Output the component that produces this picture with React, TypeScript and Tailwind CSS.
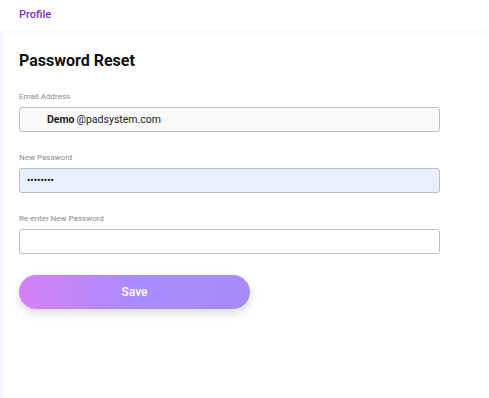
export default function App() {
  return (
    <div className="min-h-[398px] w-[489px] bg-white font-['Roboto',sans-serif]">
      <header className="h-[30px] flex items-center px-[19px] bg-white shadow-[0_2px_4px_rgba(120,110,200,0.06)] relative z-10">
        <span className="text-[11px] font-medium text-[#7b2fbe]">Profile</span>
      </header>
      <main className="border-l-[3px] border-[#f8f7ff] min-h-[368px] pl-[16px] pt-[21px]">
        <h1 className="text-[16px] font-bold text-[#111] leading-[20px]">Password Reset</h1>
        <div className="mt-[21px] flex flex-col gap-[21px] w-[421px]">
          <div>
            <label className="block text-[8px] leading-[10px] text-[#8a8a8a]">Email Address</label>
            <div className="mt-[5px] h-[25px] rounded-[3px] border border-[#bdbdbd] bg-[#f9f9f9] flex items-center pl-[27px] text-[10.5px] text-[#222]">
              <span className="font-bold mr-[2px]">Demo</span>
              <span>@padsystem.com</span>
            </div>
          </div>
          <div>
            <label className="block text-[8px] leading-[10px] text-[#8a8a8a]">New Password</label>
            <div className="mt-[5px] h-[25px] rounded-[3px] border border-[#bdbdbd] bg-[#e8f0fe] flex items-center pl-[7px] text-[10px] text-[#111]">
              ••••••••
            </div>
          </div>
          <div>
            <label className="block text-[8px] leading-[10px] text-[#8a8a8a]">Re-enter New Password</label>
            <div className="mt-[5px] h-[25px] rounded-[3px] border border-[#bdbdbd] bg-white" />
          </div>
        </div>
        <button className="mt-[21px] h-[34px] w-[231px] rounded-full bg-gradient-to-r from-[#d580f5] via-[#aa8bfd] to-[#a78bfa] text-white text-[12px] font-medium shadow-[0_4px_10px_rgba(0,0,0,0.15)]">
          Save
        </button>
      </main>
    </div>
  )
}
